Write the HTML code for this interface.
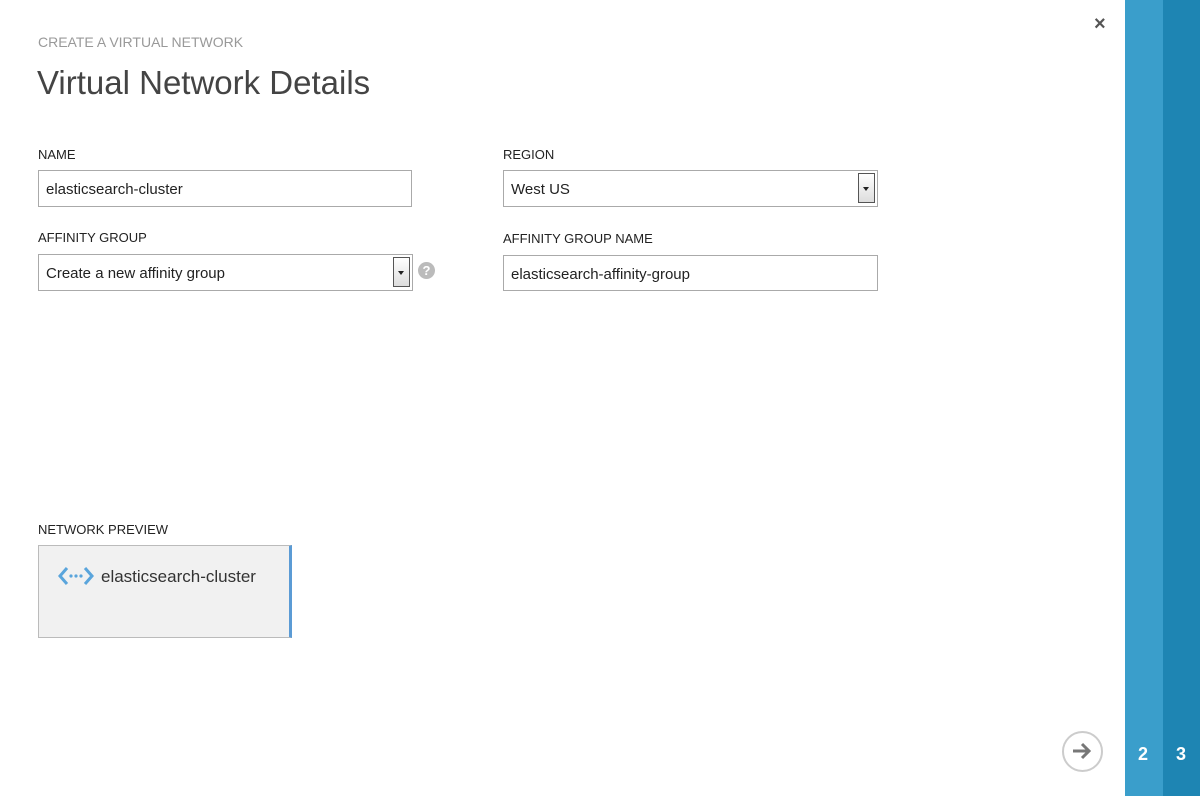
<!DOCTYPE html>
<html><head><style>
body{margin:0;width:1200px;height:796px;position:relative;background:#fff;font-family:"Liberation Sans",sans-serif;overflow:hidden;color:#222}
.a{position:absolute}
.lbl{font-size:13px;color:#222}
.box{border:1px solid #aaa;background:#fff;font-size:15px;color:#222;box-sizing:border-box;padding-left:7px;line-height:37px}
.dd{position:absolute;right:2px;top:2px;width:17px;height:30px;border:1px solid #555;background:linear-gradient(#fff,#ddd);box-sizing:border-box}
.dd:after{content:"";position:absolute;left:4px;top:13px;border:3px solid transparent;border-top:4px solid #222}
</style></head><body>
<div class="a" style="left:38px;top:34px;font-size:14px;color:#999">CREATE A VIRTUAL NETWORK</div>
<div class="a" style="left:37px;top:64px;font-size:33px;color:#444;font-weight:300">Virtual Network Details</div>
<div class="a lbl" style="left:38px;top:147px">NAME</div>
<div class="a box" style="left:38px;top:170px;width:374px;height:37px">elasticsearch-cluster</div>
<div class="a lbl" style="left:38px;top:230px">AFFINITY GROUP</div>
<div class="a box" style="left:38px;top:254px;width:375px;height:37px">Create a new affinity group<div class="dd"></div></div>
<div class="a" style="left:418px;top:262px;width:17px;height:17px;border-radius:50%;background:#bbb;color:#fff;font-size:13px;font-weight:bold;text-align:center;line-height:17px">?</div>
<div class="a lbl" style="left:503px;top:147px">REGION</div>
<div class="a box" style="left:503px;top:170px;width:375px;height:37px">West US<div class="dd"></div></div>
<div class="a lbl" style="left:503px;top:231px">AFFINITY GROUP NAME</div>
<div class="a box" style="left:503px;top:255px;width:375px;height:36px">elasticsearch-affinity-group</div>
<div class="a lbl" style="left:38px;top:522px">NETWORK PREVIEW</div>
<div class="a" style="left:38px;top:545px;width:254px;height:93px;background:#f1f1f1;border:1px solid #bbb;border-right:3px solid #5b9bd5;box-sizing:border-box"></div>
<svg class="a" style="left:58px;top:566px" width="36" height="20"><path d="M9 2 L2 10 L9 18 M27 2 L34 10 L27 18" fill="none" stroke="#5aa5dc" stroke-width="3"/><circle cx="13" cy="10" r="1.6" fill="#5aa5dc"/><circle cx="18" cy="10" r="1.6" fill="#5aa5dc"/><circle cx="23" cy="10" r="1.6" fill="#5aa5dc"/></svg>
<div class="a" style="left:101px;top:567px;font-size:17px;color:#333">elasticsearch-cluster</div>
<div class="a" style="left:1094px;top:13px;font-size:20px;color:#555;font-weight:bold">×</div>
<div class="a" style="left:1062px;top:731px;width:37px;height:37px;border:2px solid #ccc;border-radius:50%"></div>
<svg class="a" style="left:1071px;top:741px" width="22" height="20"><path d="M2 10 H18 M11 3 L18 10 L11 17" fill="none" stroke="#777" stroke-width="3"/></svg>
<div class="a" style="left:1125px;top:0;width:38px;height:796px;background:#3a9ecb"></div>
<div class="a" style="left:1163px;top:0;width:37px;height:796px;background:#1e85b3"></div>
<div class="a" style="left:1138px;top:744px;color:#fff;font-weight:bold;font-size:18px">2</div>
<div class="a" style="left:1176px;top:744px;color:#fff;font-weight:bold;font-size:18px">3</div>
</body></html>
